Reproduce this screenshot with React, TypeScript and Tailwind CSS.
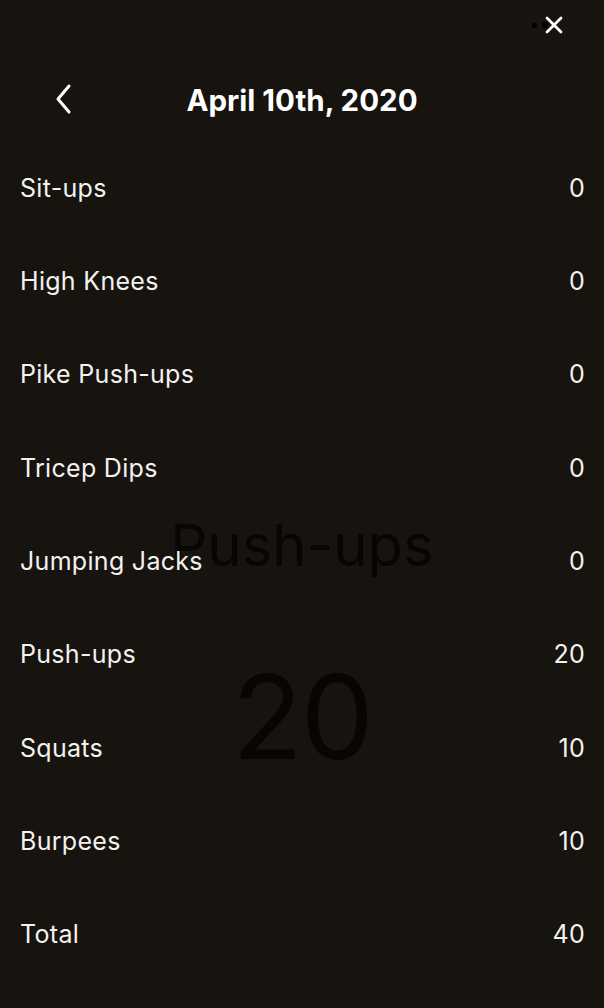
import React from "react";

const rows: [string, number][] = [
  ["Sit-ups", 0],
  ["High Knees", 0],
  ["Pike Push-ups", 0],
  ["Tricep Dips", 0],
  ["Jumping Jacks", 0],
  ["Push-ups", 20],
  ["Squats", 10],
  ["Burpees", 10],
  ["Total", 40],
];

export default function App() {
  return (
    <div
      className="relative w-full h-[1008px] overflow-hidden bg-[#17130f] text-[#f4f2ef]"
      style={{ fontFamily: "Inter, 'Noto Sans', sans-serif" }}
    >
      {/* ghost background content */}
      <div className="absolute inset-0 flex flex-col items-center pointer-events-none">
        <div className="mt-[505px] text-[58px] leading-none text-[#080604] h-[80px] flex items-center">Push-ups</div>
        <div className="mt-[74px] text-[116px] leading-none text-[#080604] tracking-[-2px]">20</div>
      </div>

      <div className="relative flex flex-col">
        {/* top bar */}
        <div className="h-[50px] flex items-center justify-end pr-[40px] gap-[7px]">
          <span className="w-[5px] h-[5px] rounded-full bg-black" />
          <div className="relative w-[20px] h-[20px] flex items-center justify-center">
            <span className="absolute w-[6px] h-[6px] rounded-full bg-black left-[-2px]" />
            <svg width="20" height="20" viewBox="0 0 20 20" className="relative">
              <path d="M3 3 L17 17 M17 3 L3 17" stroke="#ffffff" strokeWidth="2.8" strokeLinecap="round" />
            </svg>
          </div>
        </div>

        {/* header */}
        <div className="h-[92px] flex items-center relative">
          <div className="absolute left-[53px] top-[33px]">
            <svg width="20" height="32" viewBox="0 0 20 32">
              <path d="M16 3 L5 16 L16 29" stroke="#ffffff" strokeWidth="3" fill="none" strokeLinecap="round" strokeLinejoin="round" />
            </svg>
          </div>
          <div className="w-full text-center text-[29.5px] font-bold text-white tracking-[0px] mt-[9px]">
            April 10th, 2020
          </div>
        </div>

        {/* rows */}
        <div className="flex flex-col">
          {rows.map(([name, v]) => (
            <div key={name} className="h-[93.3px] shrink-0 flex items-center justify-between pl-[20px] pr-[19px] text-[25px] tracking-[0.3px]">
              <span>{name}</span>
              <span>{v}</span>
            </div>
          ))}
        </div>
      </div>
    </div>
  );
}
